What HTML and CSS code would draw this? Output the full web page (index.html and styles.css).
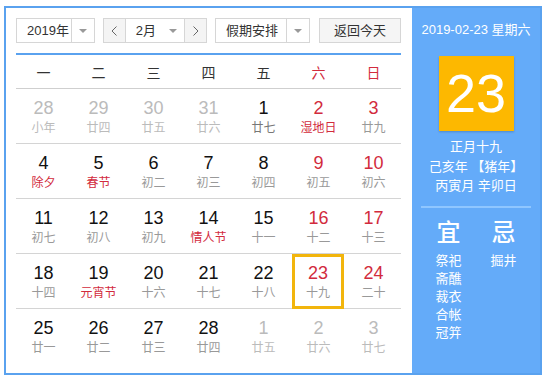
FILE: index.html
```html
<!DOCTYPE html>
<html lang="zh-CN">
  <head>
    <meta charset="UTF-8" />
    <title>万年历</title>
    <link rel="stylesheet" href="styles.css">
  </head>
  <body>
    <div class="calendar">
      <div class="main">
        <div class="toolbar">
          <div class="select year">
            <span class="val">2019年</span>
            <span class="arrow"></span>
          </div>
          <div class="select month">
            <span class="step">
              <svg width="6" height="10" viewBox="0 0 6 10"><polyline points="5.5,0.5 1,5 5.5,9.5" fill="none" stroke="#666" stroke-width="1"/></svg>
            </span>
            <span class="val">2月</span>
            <span class="arrow plain"></span>
            <span class="step next">
              <svg width="6" height="10" viewBox="0 0 6 10"><polyline points="0.5,0.5 5,5 0.5,9.5" fill="none" stroke="#666" stroke-width="1"/></svg>
            </span>
          </div>
          <div class="select holiday">
            <span class="val">假期安排</span>
            <span class="arrow"></span>
          </div>
          <div class="today-btn">返回今天</div>
        </div>

        <div class="week">
          <span>一</span><span>二</span><span>三</span><span>四</span><span>五</span>
          <span class="red">六</span><span class="red">日</span>
        </div>

        <div class="row">
          <div class="cell other"><div class="num">28</div><div class="lunar">小年</div></div>
          <div class="cell other"><div class="num">29</div><div class="lunar">廿四</div></div>
          <div class="cell other"><div class="num">30</div><div class="lunar">廿五</div></div>
          <div class="cell other"><div class="num">31</div><div class="lunar">廿六</div></div>
          <div class="cell"><div class="num">1</div><div class="lunar dark">廿七</div></div>
          <div class="cell weekend"><div class="num">2</div><div class="lunar fest">湿地日</div></div>
          <div class="cell weekend"><div class="num">3</div><div class="lunar">廿九</div></div>
        </div>
        <div class="row">
          <div class="cell"><div class="num">4</div><div class="lunar fest">除夕</div></div>
          <div class="cell"><div class="num">5</div><div class="lunar fest">春节</div></div>
          <div class="cell"><div class="num">6</div><div class="lunar">初二</div></div>
          <div class="cell"><div class="num">7</div><div class="lunar">初三</div></div>
          <div class="cell"><div class="num">8</div><div class="lunar">初四</div></div>
          <div class="cell weekend"><div class="num">9</div><div class="lunar">初五</div></div>
          <div class="cell weekend"><div class="num">10</div><div class="lunar">初六</div></div>
        </div>
        <div class="row">
          <div class="cell"><div class="num">11</div><div class="lunar">初七</div></div>
          <div class="cell"><div class="num">12</div><div class="lunar">初八</div></div>
          <div class="cell"><div class="num">13</div><div class="lunar">初九</div></div>
          <div class="cell"><div class="num">14</div><div class="lunar fest">情人节</div></div>
          <div class="cell"><div class="num">15</div><div class="lunar">十一</div></div>
          <div class="cell weekend"><div class="num">16</div><div class="lunar">十二</div></div>
          <div class="cell weekend"><div class="num">17</div><div class="lunar">十三</div></div>
        </div>
        <div class="row">
          <div class="cell"><div class="num">18</div><div class="lunar">十四</div></div>
          <div class="cell"><div class="num">19</div><div class="lunar fest">元宵节</div></div>
          <div class="cell"><div class="num">20</div><div class="lunar">十六</div></div>
          <div class="cell"><div class="num">21</div><div class="lunar">十七</div></div>
          <div class="cell"><div class="num">22</div><div class="lunar">十八</div></div>
          <div class="cell weekend today"><div class="num">23</div><div class="lunar">十九</div></div>
          <div class="cell weekend"><div class="num">24</div><div class="lunar">二十</div></div>
        </div>
        <div class="row">
          <div class="cell"><div class="num">25</div><div class="lunar">廿一</div></div>
          <div class="cell"><div class="num">26</div><div class="lunar">廿二</div></div>
          <div class="cell"><div class="num">27</div><div class="lunar">廿三</div></div>
          <div class="cell"><div class="num">28</div><div class="lunar">廿四</div></div>
          <div class="cell other"><div class="num">1</div><div class="lunar">廿五</div></div>
          <div class="cell other"><div class="num">2</div><div class="lunar">廿六</div></div>
          <div class="cell other"><div class="num">3</div><div class="lunar">廿七</div></div>
        </div>
      </div>

      <div class="side">
        <div class="date">2019-02-23 星期六</div>
        <div class="big">23</div>
        <div class="info">
          <div>正月十九</div>
          <div>己亥年 【猪年】</div>
          <div>丙寅月 辛卯日</div>
        </div>
        <div class="sep"></div>
        <div class="yiji">
          <div class="col">
            <div class="head">宜</div>
            <div>祭祀</div>
            <div>斋醮</div>
            <div>裁衣</div>
            <div>合帐</div>
            <div>冠笄</div>
          </div>
          <div class="col">
            <div class="head">忌</div>
            <div>掘井</div>
          </div>
        </div>
      </div>
    </div>
  </body>
</html>
```

FILE: styles.css
```css
body {
  margin: 0;
  background: #fff;
  font-family: "Liberation Sans", "Noto Sans CJK SC", sans-serif;
}
.calendar {
  margin: 6px 0 0 4px;
  width: 538px;
  height: 369px;
  box-sizing: border-box;
  border: 2px solid #5aa2ef;
  display: flex;
}
.main {
  width: 406px;
  padding: 10px 11px 0 10px;
  box-sizing: border-box;
}
.toolbar {
  display: flex;
  height: 25px;
}
.select {
  display: flex;
  height: 25px;
  box-sizing: border-box;
  border: 1px solid #d6d6d6;
  background: #fff;
  font-size: 13px;
  color: #333;
  margin-right: 8px;
}
.select .val {
  line-height: 23px;
  padding-left: 10px;
  box-sizing: border-box;
}
.arrow {
  width: 22px;
  display: flex;
  align-items: center;
  justify-content: center;
  border-left: 1px solid #d6d6d6;
}
.arrow::after {
  content: "";
  border-left: 4px solid transparent;
  border-right: 4px solid transparent;
  border-top: 4px solid #999;
}
.arrow.plain {
  border-left: none;
}
.year {
  width: 79px;
}
.year .val {
  width: 55px;
}
.month {
  width: 104px;
}
.month .val {
  width: 37px;
}
.step {
  width: 21px;
  background: #f4f4f4;
  display: flex;
  align-items: center;
  justify-content: center;
  border-right: 1px solid #d6d6d6;
}
.step.next {
  border-right: none;
  border-left: 1px solid #d6d6d6;
}
.holiday {
  width: 95px;
  margin-right: 9px;
}
.holiday .val {
  width: 71px;
}
.today-btn {
  width: 82px;
  height: 25px;
  box-sizing: border-box;
  border: 1px solid #d6d6d6;
  background: #f5f5f5;
  font-size: 13px;
  color: #333;
  line-height: 23px;
  text-align: center;
}
.week {
  margin-top: 10px;
  border-top: 2px solid #5aa2ef;
  border-bottom: 1px solid #cfcfcf;
  height: 33px;
  display: grid;
  grid-template-columns: repeat(7, 55px);
  align-items: center;
  text-align: center;
  font-size: 14px;
  color: #333;
}
.red {
  color: #d22b3d;
}
.row {
  display: grid;
  grid-template-columns: repeat(7, 55px);
  height: 54px;
  border-bottom: 1px solid #d4d4d4;
}
.row:last-child {
  border-bottom: none;
}
.cell {
  text-align: center;
  padding-top: 8px;
  box-sizing: border-box;
}
.num {
  font-size: 18px;
  line-height: 22px;
  color: #111;
}
.lunar {
  font-size: 12px;
  line-height: 18px;
  color: #999;
}
.lunar.dark {
  color: #777;
}
.lunar.fest {
  color: #d22b3d;
}
.weekend .num {
  color: #d22b3d;
}
.other .num {
  color: #bbb;
}
.other .lunar {
  color: #bbb;
}
.today {
  height: 55px;
  margin: 0 2px 0 1px;
  padding-top: 5px;
  border: 3px solid #f2b50c;
}
.side {
  flex: 1;
  background: #64abf9;
  color: #fff;
  text-align: center;
}
.date {
  margin-top: 12px;
  font-size: 13px;
  line-height: 20px;
}
.big {
  width: 75px;
  height: 75px;
  margin: 16px auto 0;
  background: #fdb800;
  font-size: 54px;
  line-height: 75px;
  box-shadow: 0 1px 2px rgba(0, 0, 0, 0.2);
}
.info {
  margin-top: 6px;
  font-size: 13px;
  line-height: 19.5px;
}
.sep {
  width: 110px;
  height: 2px;
  margin: 10px auto 0;
  background: #8fc6ff;
}
.yiji {
  width: 110px;
  margin: 0 auto;
  display: flex;
}
.col {
  width: 55px;
  font-size: 13px;
  line-height: 18px;
}
.col .head {
  margin: 11px 0 5px;
  font-size: 24px;
  font-weight: 500;
  line-height: 28px;
}
```
